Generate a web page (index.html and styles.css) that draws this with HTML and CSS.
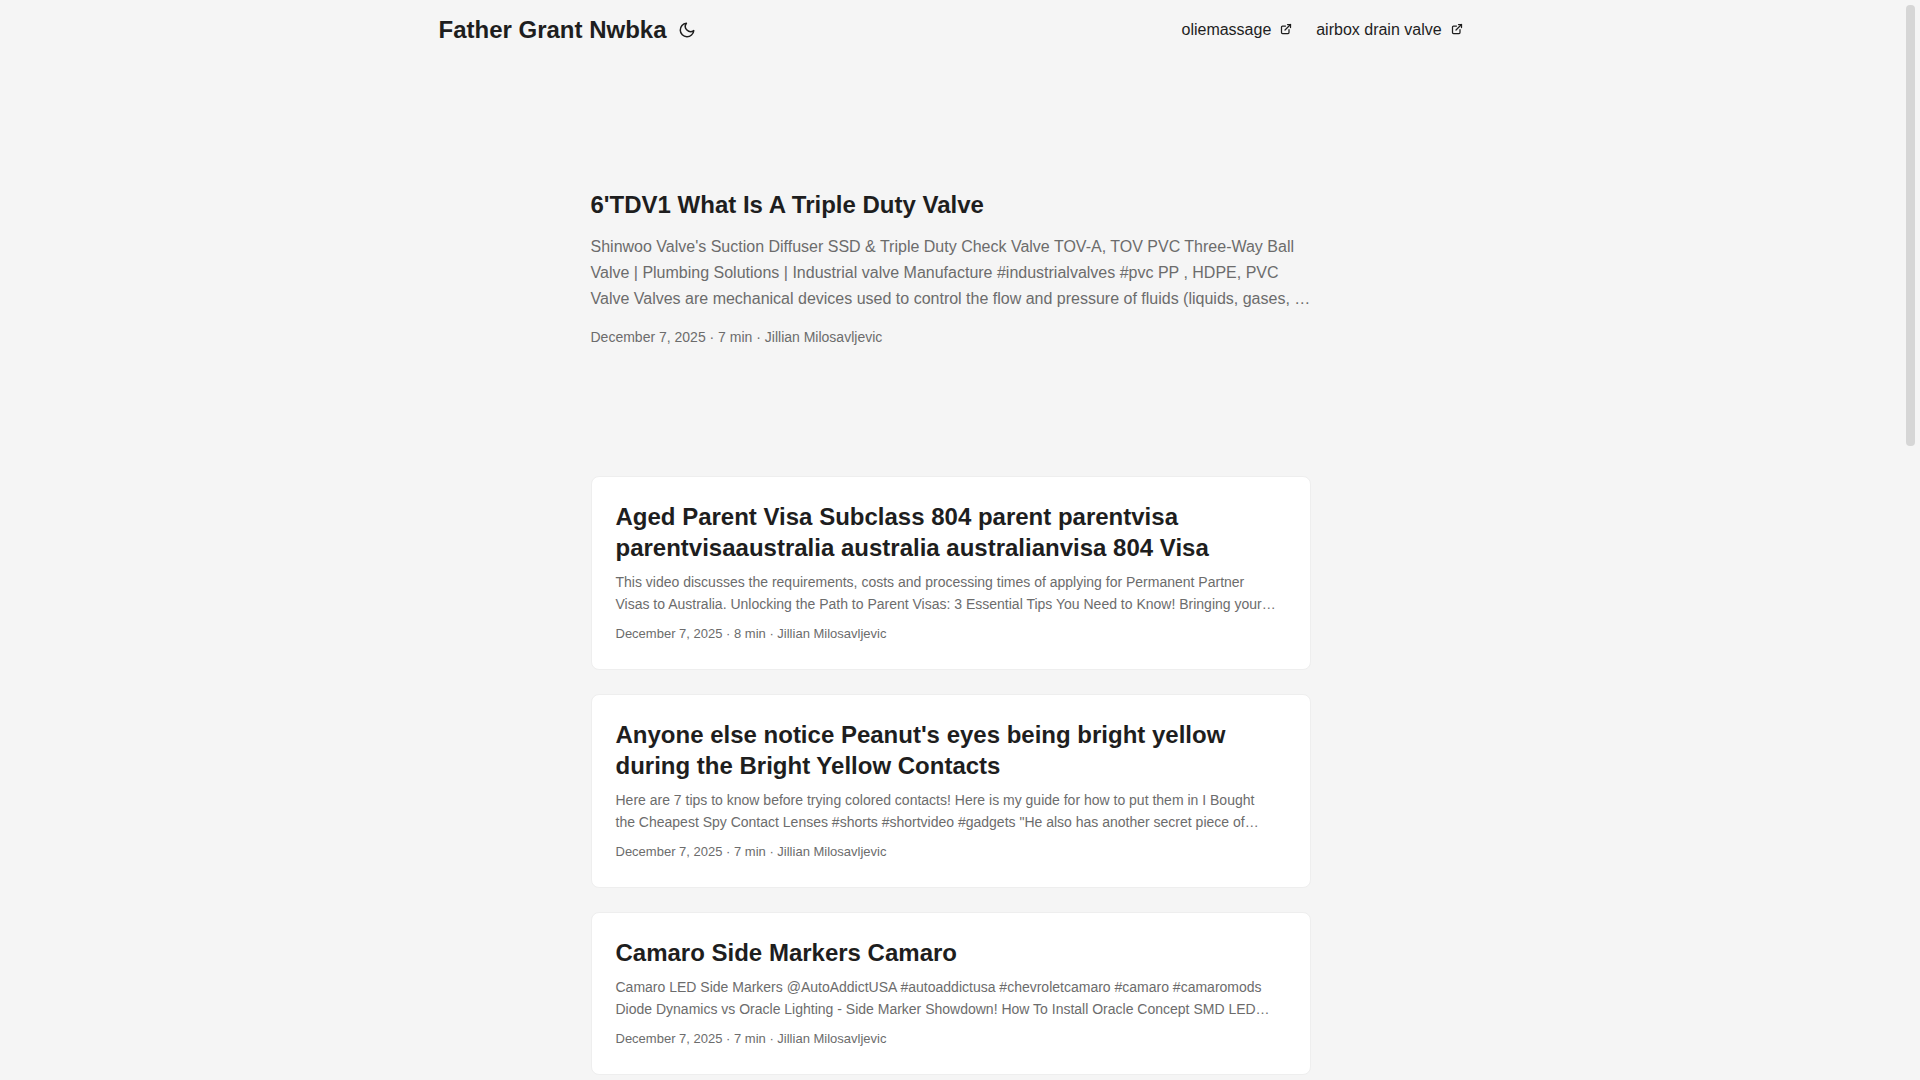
FILE: index.html
```
<!DOCTYPE html>
<html lang="en">
<head>
    <meta charset="UTF-8">
    <meta name="viewport" content="width=device-width, initial-scale=1.0">
    <title>Father Grant Nwbka</title>
    <link rel="stylesheet" href="styles.css">
</head>
<body>
    <header class="header">
        <nav class="nav">
            <div class="logo">
                <a href="#">Father Grant Nwbka</a>
                <button class="theme-toggle" type="button" aria-label="Toggle theme">
                    <svg width="26" height="18" viewBox="0 0 24 24" fill="none" stroke="currentColor" stroke-width="2" stroke-linecap="round" stroke-linejoin="round">
                        <path d="M21 12.79A9 9 0 1 1 11.21 3 7 7 0 0 0 21 12.79z"></path>
                    </svg>
                </button>
            </div>
            <ul class="menu">
                <li>
                    <a href="#">oliemassage&nbsp;
                        <svg width="12" height="12" viewBox="0 0 24 24" fill="none" stroke="currentColor" stroke-width="2.5" stroke-linecap="round" stroke-linejoin="round">
                            <path d="M18 13v6a2 2 0 01-2 2H5a2 2 0 01-2-2V8a2 2 0 012-2h6"></path>
                            <path d="M15 3h6v6"></path>
                            <path d="M10 14L21 3"></path>
                        </svg>
                    </a>
                </li>
                <li>
                    <a href="#">airbox drain valve&nbsp;
                        <svg width="12" height="12" viewBox="0 0 24 24" fill="none" stroke="currentColor" stroke-width="2.5" stroke-linecap="round" stroke-linejoin="round">
                            <path d="M18 13v6a2 2 0 01-2 2H5a2 2 0 01-2-2V8a2 2 0 012-2h6"></path>
                            <path d="M15 3h6v6"></path>
                            <path d="M10 14L21 3"></path>
                        </svg>
                    </a>
                </li>
            </ul>
        </nav>
    </header>

    <main class="main">
        <article class="first-entry">
            <h2><a href="#">6'TDV1 What Is A Triple Duty Valve</a></h2>
            <p class="entry-content">Shinwoo Valve's Suction Diffuser SSD &amp; Triple Duty Check Valve TOV-A, TOV PVC Three-Way Ball Valve | Plumbing Solutions | Industrial valve Manufacture #industrialvalves #pvc PP , HDPE, PVC Valve Valves are mechanical devices used to control the flow and pressure of fluids (liquids, gases, …</p>
            <footer class="entry-footer">December 7, 2025 · 7 min · Jillian Milosavljevic</footer>
        </article>

        <article class="post-entry">
            <h2><a href="#">Aged Parent Visa Subclass 804 parent parentvisa parentvisaaustralia australia australianvisa 804 Visa</a></h2>
            <p class="entry-content">This video discusses the requirements, costs and processing times of applying for Permanent Partner<br>Visas to Australia. Unlocking the Path to Parent Visas: 3 Essential Tips You Need to Know! Bringing your…</p>
            <footer class="entry-footer">December 7, 2025 · 8 min · Jillian Milosavljevic</footer>
        </article>

        <article class="post-entry">
            <h2><a href="#">Anyone else notice Peanut's eyes being bright yellow during the Bright Yellow Contacts</a></h2>
            <p class="entry-content">Here are 7 tips to know before trying colored contacts! Here is my guide for how to put them in I Bought<br>the Cheapest Spy Contact Lenses #shorts #shortvideo #gadgets "He also has another secret piece of…</p>
            <footer class="entry-footer">December 7, 2025 · 7 min · Jillian Milosavljevic</footer>
        </article>

        <article class="post-entry">
            <h2><a href="#">Camaro Side Markers Camaro</a></h2>
            <p class="entry-content">Camaro LED Side Markers @AutoAddictUSA #autoaddictusa #chevroletcamaro #camaro #camaromods Diode Dynamics vs Oracle Lighting - Side Marker Showdown! How To Install Oracle Concept SMD LED…</p>
            <footer class="entry-footer">December 7, 2025 · 7 min · Jillian Milosavljevic</footer>
        </article>
    </main>

    <div class="scrollbar" aria-hidden="true">
        <div class="scrollbar-thumb"></div>
    </div>
</body>
</html>
```
FILE: styles.css
```
:root {
    --gap: 24px;
    --scrollbar: 19px;
    --theme: #f5f5f5;
    --entry: #fff;
    --primary: #1e1e1e;
    --secondary: #6c6c6c;
    --tertiary: #d6d6d6;
    --border: #eee;
}

* {
    box-sizing: border-box;
    margin: 0;
    padding: 0;
}

html {
    scrollbar-width: none;
}

body {
    padding-right: var(--scrollbar);
    font-family: "Liberation Sans", Arial, sans-serif;
    font-size: 16px;
    line-height: 26px;
    color: var(--primary);
    background: var(--theme);
}

a {
    color: inherit;
    text-decoration: none;
}

/* scrollbar */
.scrollbar {
    position: fixed;
    top: 0;
    right: 0;
    bottom: 0;
    width: var(--scrollbar);
    padding: 5px;
}

.scrollbar-thumb {
    height: 41.2%;
    background: var(--tertiary);
    border-radius: 4px;
}

/* header */
.nav {
    display: flex;
    flex-wrap: wrap;
    justify-content: space-between;
    max-width: 1072px;
    margin: 0 auto;
    padding: 0 var(--gap);
    line-height: 60px;
}

.logo {
    display: flex;
    align-items: center;
    gap: 7px;
    font-size: 24px;
    font-weight: bold;
}

.theme-toggle {
    display: flex;
    color: inherit;
    background: none;
    border: none;
    cursor: pointer;
}

.menu {
    display: flex;
    gap: var(--gap);
    list-style: none;
}

/* entries */
.main {
    max-width: 768px;
    margin: 0 auto;
    padding: var(--gap);
}

h2 {
    font-size: 24px;
    line-height: 31px;
}

.entry-content,
.entry-footer {
    color: var(--secondary);
}

.first-entry {
    display: flex;
    flex-direction: column;
    justify-content: center;
    min-height: 320px;
    margin: var(--gap) 0 48px;
}

.first-entry .entry-content {
    margin: 14px 0;
}

.first-entry .entry-footer {
    font-size: 14px;
    line-height: 22px;
}

.post-entry {
    margin-bottom: var(--gap);
    padding: var(--gap);
    background: var(--entry);
    border: 1px solid var(--border);
    border-radius: 8px;
}

.post-entry .entry-content {
    margin: 8px 0;
    font-size: 14px;
    line-height: 22px;
}

.post-entry .entry-footer {
    font-size: 13px;
    line-height: 22px;
}
```
